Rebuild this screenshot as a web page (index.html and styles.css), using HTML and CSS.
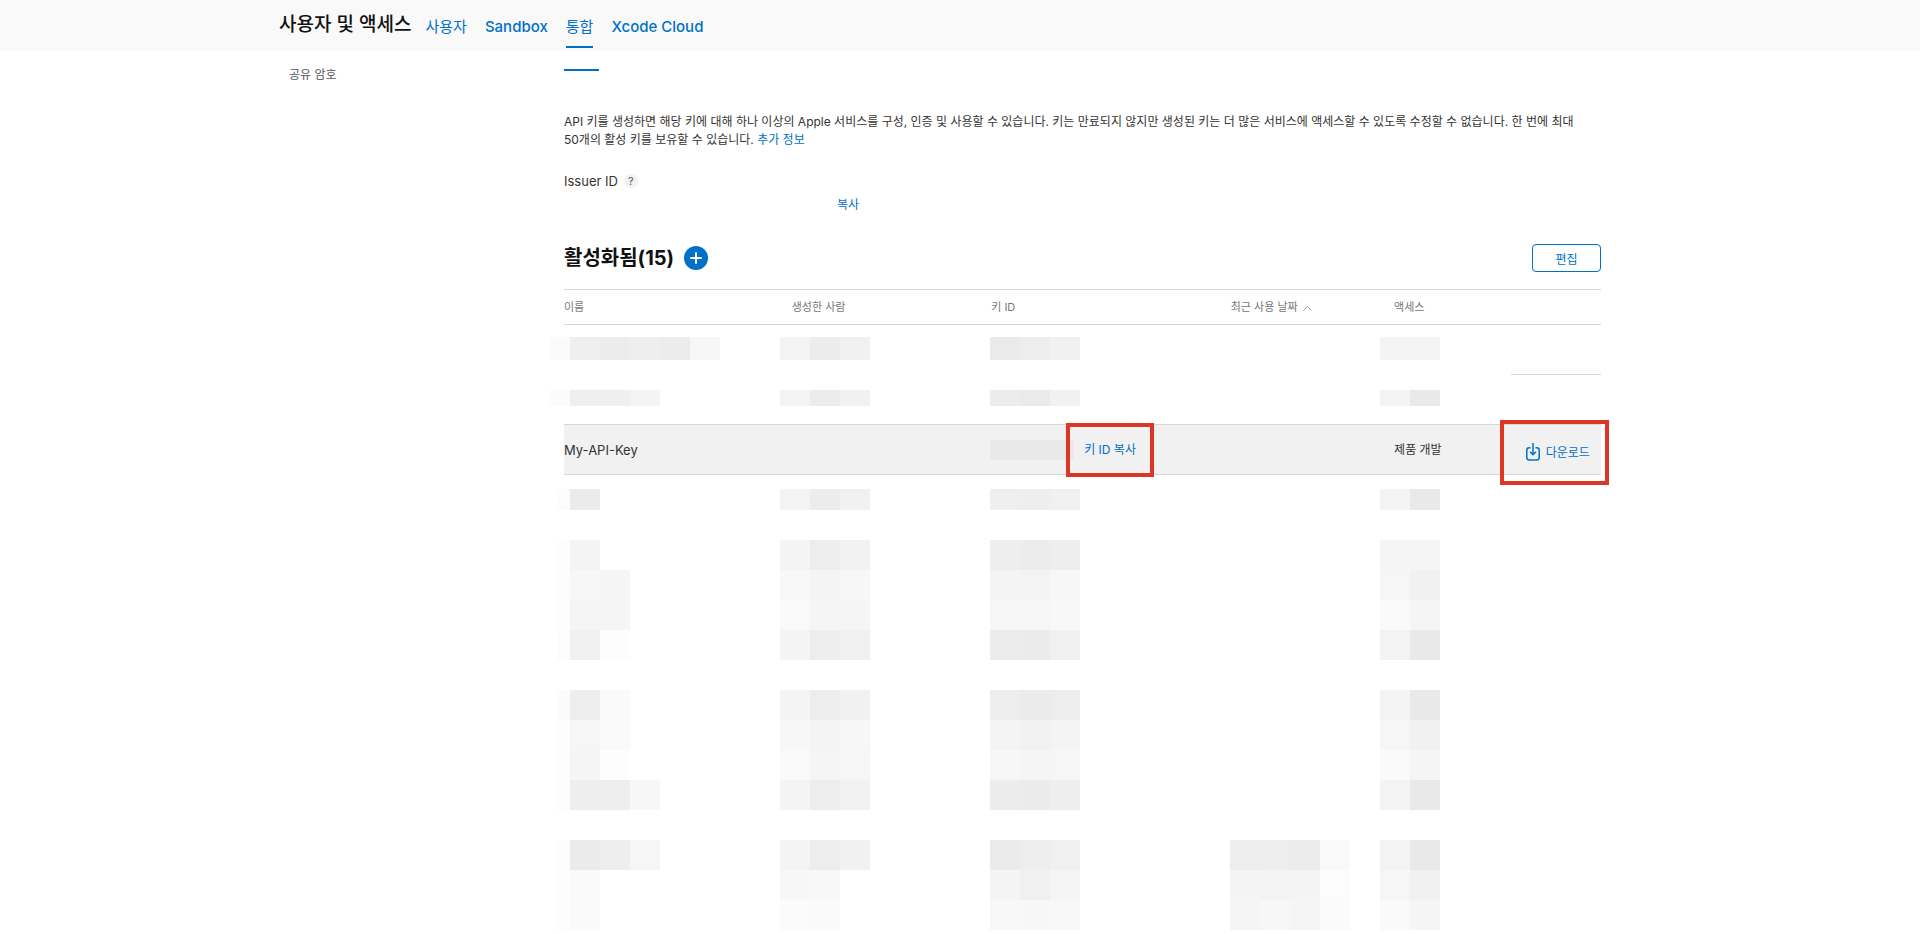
FILE: index.html
```html
<!DOCTYPE html>
<html lang="ko">
	<head>
		<meta charset="utf-8">
		<title>사용자 및 액세스</title>
		<link rel="stylesheet" href="styles.css">
	</head>
	<body>
		<header class="topbar">
			<div class="wrap topbar-inner">
				<h1>사용자 및 액세스</h1>
				<nav class="nav">
					<a href="#" class="ko">사용자</a>
					<a href="#">Sandbox</a>
					<a href="#" class="ko active">통합</a>
					<a href="#">Xcode Cloud</a>
				</nav>
			</div>
		</header>

		<div class="wrap page">
			<aside class="sidebar">
				<a href="#">공유 암호</a>
			</aside>
			<main class="content">
				<div class="tab-line"></div>
				<p class="desc">API 키를 생성하면 해당 키에 대해 하나 이상의 Apple 서비스를 구성, 인증 및 사용할 수 있습니다. 키는 만료되지 않지만 생성된 키는 더 많은 서비스에 액세스할 수 있도록 수정할 수 없습니다. 한 번에 최대 50개의 활성 키를 보유할 수 있습니다. <a href="#">추가 정보</a></p>

				<div class="issuer">
					<span>Issuer ID</span>
					<button class="help" type="button">?</button>
				</div>
				<div class="issuer-value"><a href="#">복사</a></div>

				<div class="list-head">
					<h2>활성화됨(15)</h2>
					<button class="add" type="button" aria-label="추가">
						<svg width="24" height="24" viewBox="0 0 24 24">
							<circle cx="12" cy="12" r="12" fill="#0070c9"/>
							<path d="M12 7v10M7 12h10" stroke="#fff" stroke-width="2" stroke-linecap="round"/>
						</svg>
					</button>
					<button class="edit" type="button">편집</button>
				</div>

				<table class="keys">
					<colgroup>
						<col class="c-name">
						<col class="c-by">
						<col class="c-id">
						<col class="c-date">
						<col class="c-access">
						<col>
					</colgroup>
					<thead>
						<tr>
							<th>이름</th>
							<th class="by">생성한 사람</th>
							<th class="id">키 ID</th>
							<th class="id">최근 사용 날짜
								<svg class="caret" width="9" height="6" viewBox="0 0 9 6"><path d="M.5 5.5l4-4 4 4" fill="none" stroke="#999"/></svg>
							</th>
							<th class="access">액세스</th>
							<th></th>
						</tr>
					</thead>
					<tbody id="before"></tbody>
					<tbody>
						<tr class="selected">
							<td class="name">My-API-Key</td>
							<td></td>
							<td>
								<div class="key-cell">
									<span class="key-mask"></span>
									<a href="#" class="marked">키 ID 복사</a>
								</div>
							</td>
							<td></td>
							<td class="access">제품 개발</td>
							<td>
								<a href="#" class="marked download">
									<svg width="14" height="18" viewBox="0 0 14 18" fill="none" stroke="#0070c9" stroke-width="1.5">
										<path d="M4.500 4.800H3.200Q.8 4.800 .8 7.200V14.600Q.8 17 3.200 17H10.800Q13.200 17 13.200 14.600V7.200Q13.200 4.800 10.800 4.800H9.500"/>
										<path d="M7 0V11.500M4 8.800l3 3 3-3"/>
									</svg>
									<span>다운로드</span>
								</a>
							</td>
						</tr>
					</tbody>
					<tbody id="after"></tbody>
				</table>
			</main>
		</div>

		<script type="text/javascript">
			// 가려진 행: 각 칸은 회색 음영 블록의 줄 목록
			// 열 순서: 이름, 생성한 사람, 키 ID, 최근 사용 날짜, 액세스
			let before = [
				{ cls: "r1", cells: [["fb ef ec ee ec f7"], ["f3 ec f1"], ["ea ed f1"], [], ["f4 f4"]] },
				{ cls: "r2", cells: [["fb ef ef f4"], ["f3 ec f1"], ["ec ea f1"], [], ["f3 e9"]] }
			]
			let after = [
				{ cls: "r3", cells: [["fc eb"], ["f3 ec f1"], ["ef ee f0"], [], ["f3 e9"]] },
				{ cls: "r4", cells: [
					["fd f4", "fd f7 f5", "fd f5 f5", "fc f0 fd"],
					["f4 ed f2", "f8 f4 f7", "f9 f5 f5", "f4 ed f0"],
					["ee ec ee", "f4 f3 f7", "f6 f6 f8", "ec eb f0"],
					[],
					["f5 f5", "f6 f1", "fa f5", "f3 e9"]
				] },
				{ cls: "r4", cells: [
					["fb ee fa", "fd f6 fa", "fd f5 fd", "fd ee ee f7"],
					["f4 ed f1", "f7 f4 f7", "f9 f5 f6", "f4 ed f2"],
					["ed eb ed", "f4 f2 f4", "f7 f5 f6", "ec eb ee"],
					[],
					["f3 e9", "f6 f1", "fa f5", "f3 e9"]
				] },
				{ cls: "r5", cells: [
					["fd eb ee f6", "fd fa", "fd fa"],
					["f4 ed f1", "f7 f8", "fb fa"],
					["eb ee f0", "f4 f0 f5", "f8 f7 f8"],
					["ed ed ec f9", "f4 f3 f4 fc", "f5 f7 f5 fb"],
					["f3 e9", "f6 f1", "fa f5"]
				] }
			]

			function addRows(id, rows){
				let body = document.getElementById(id)
				for(let i = 0;i < rows.length;i++){
					let tr = document.createElement("tr")
					tr.className = "masked " + rows[i].cls
					let cells = rows[i].cells
					for(let j = 0;j < cells.length;j++){
						let td = document.createElement("td")
						for(let k = 0;k < cells[j].length;k++){
							let line = document.createElement("div")
							line.className = "mosaic"
							cells[j][k].split(" ").forEach(function(s){
								let b = document.createElement("span")
								b.style.backgroundColor = "#" + s + s + s
								line.appendChild(b)
							})
							td.appendChild(line)
						}
						tr.appendChild(td)
					}
					tr.appendChild(document.createElement("td"))
					body.appendChild(tr)
				}
			}
			addRows("before", before)
			addRows("after", after)
		</script>
	</body>
</html>
```
FILE: styles.css
```css
* {
	margin: 0;
	padding: 0;
	box-sizing: border-box;
}
body {
	background: #fff;
	color: #333;
	font-family: Inter, "Noto Sans CJK KR", sans-serif;
	font-size: 12px;
	line-height: 18px;
	overflow-x: hidden;
}
a {
	color: #0070c9;
	text-decoration: none;
}
button {
	font-family: inherit;
	cursor: pointer;
}
.wrap {
	max-width: 1362px;
	margin: 0 auto;
	padding-right: 40px;
}

/* 상단 바 */
.topbar {
	background: #f9f9f9;
}
.topbar-inner {
	display: flex;
	height: 51px;
}
.topbar h1 {
	color: #111;
	font-size: 19px;
	font-weight: 500;
	line-height: 50px;
	margin-right: 14px;
}
.nav {
	display: flex;
	gap: 18px;
}
.nav a {
	height: 48px;
	font-size: 15px;
	font-weight: 500;
	line-height: 54px;
}
.nav .ko {
	font-weight: 400;
}
.nav .active {
	border-bottom: 2px solid #0070c9;
}

/* 본문 */
.page {
	display: flex;
}
.sidebar {
	flex: 0 0 285px;
	padding: 15px 10px;
}
.sidebar a {
	color: #555;
}
.content {
	flex: 1;
	min-width: 0;
}
.tab-line {
	width: 35px;
	height: 20px;
	border-bottom: 2px solid #0070c9;
}
.desc {
	margin-top: 42px;
	word-break: keep-all;
}
.issuer {
	display: flex;
	align-items: center;
	gap: 6px;
	margin-top: 23px;
	font-size: 13px;
}
.help {
	width: 14px;
	height: 14px;
	border: 0;
	border-radius: 50%;
	background: #f2f2f2;
	color: #555;
	font-size: 11px;
	line-height: 14px;
}
.issuer-value {
	margin-top: 6px;
	padding-left: 273px;
}
.list-head {
	display: flex;
	align-items: center;
	margin: 30px 0 17px;
}
.list-head h2 {
	color: #111;
	font-size: 20px;
	font-weight: 700;
	line-height: 28px;
}
.add {
	width: 24px;
	height: 24px;
	margin-left: 10px;
	border: 0;
	background: none;
}
.add svg {
	display: block;
}
.edit {
	width: 69px;
	height: 28px;
	margin-left: auto;
	border: 1px solid #0070c9;
	border-radius: 4px;
	background: #fff;
	color: #0070c9;
	font-size: 12px;
}

/* 키 목록 */
.keys {
	width: 100%;
	table-layout: fixed;
	border-collapse: separate;
	border-spacing: 0;
}
.c-name {
	width: 20.8%;
}
.c-by {
	width: 20.3%;
}
.c-id {
	width: 23.1%;
}
.c-date {
	width: 14.5%;
}
.c-access {
	width: 12.6%;
}
.keys th {
	height: 36px;
	border-top: 1px solid #d6d6d6;
	border-bottom: 1px solid #d6d6d6;
	color: #777;
	font-size: 11px;
	font-weight: 400;
	text-align: left;
	white-space: nowrap;
}
.keys .by {
	padding-left: 12px;
}
.keys .id {
	padding-left: 1px;
}
.keys .access {
	padding-left: 14px;
}
.caret {
	margin-left: 2px;
}
.selected td {
	height: 51px;
	border-top: 1px solid #d6d6d6;
	border-bottom: 1px solid #d6d6d6;
	background: #f1f1f1;
}
.selected .name {
	font-size: 13px;
}
.key-cell {
	display: flex;
	align-items: center;
	gap: 10px;
}
.key-mask {
	width: 84px;
	height: 20px;
	background: #e9e9e9;
}

/* 강조 표시 */
.marked {
	position: relative;
}
.marked::after {
	content: "";
	position: absolute;
	inset: -18px;
	border: 4px solid #dc3626;
}
.download {
	display: flex;
	align-items: center;
	gap: 6px;
	margin: 6px 10px 0 15px;
	white-space: nowrap;
}
.download svg {
	margin-bottom: 2px;
}
.download::after {
	inset: -23px -18px -22px -26px;
}

/* 모자이크 */
.masked td {
	vertical-align: top;
}
.masked td:first-child .mosaic {
	margin-left: -7px;
}
.masked td:first-child .mosaic span:first-child {
	width: 13px;
}
.mosaic {
	display: flex;
	height: 30px;
}
.mosaic span {
	flex: none;
	width: 30px;
}
.r1 td {
	height: 50px;
	padding-top: 12px;
}
.r1 td:last-child {
	border-bottom: 1px solid #d6d6d6;
}
.r1 .mosaic {
	height: 23px;
}
.r2 td {
	height: 49px;
	padding-top: 15px;
}
.r2 .mosaic {
	height: 16px;
}
.r1 td:first-child .mosaic,
.r2 td:first-child .mosaic {
	margin-left: -15px;
}
.r1 td:first-child .mosaic span:first-child,
.r2 td:first-child .mosaic span:first-child {
	width: 21px;
}
.r3 td {
	height: 65px;
	padding-top: 14px;
}
.r3 .mosaic {
	height: 21px;
}
.r4 td {
	padding-bottom: 30px;
}
```
